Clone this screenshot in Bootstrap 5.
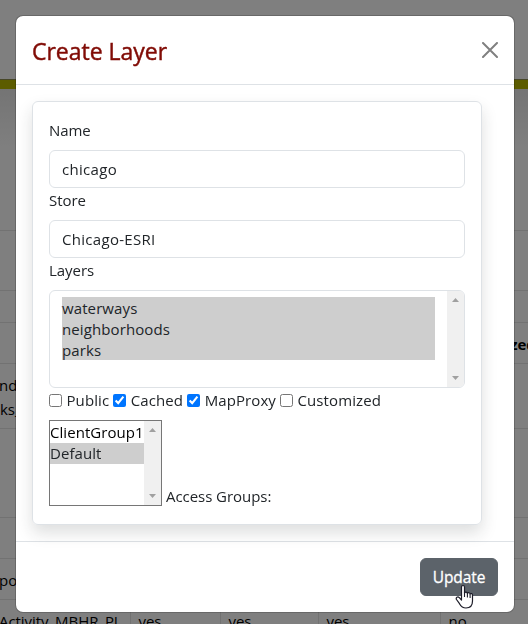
<!DOCTYPE html>
<html lang="en">
<head>
<meta charset="utf-8">
<meta name="viewport" content="width=device-width, initial-scale=1">
<title>Create Layer</title>
<link href="https://cdn.jsdelivr.net/npm/bootstrap@5.3.0/dist/css/bootstrap.min.css" rel="stylesheet">
<style>
  body { font-family: "Segoe UI", "Open Sans", sans-serif; font-size: 15px; line-height: 24px; letter-spacing: -.05px; background: #fff; height: 624px; overflow: hidden; }
  .top-strip { height: 79px; background: #fefefe; }
  .olive-bar { height: 10px; background: #b8b800; border-top: 1px solid #8f8f50; }
  .fade-area { height: 142px; background: linear-gradient(#e9e9e9, #fff 60px); border-bottom: 1px solid #e4e4e4; }
  .gap-a { height: 60px; border-bottom: 1px solid #e4e4e4; }
  .gap-b { height: 32px; border-bottom: 1px solid #e4e4e4; }
  .layer-table { table-layout: fixed; width: 528px; margin: 0; color: #000; }
  .layer-table > :not(caption) > * > * { padding: 9px 8px 7px; border: 0 solid #e4e4e4; border-bottom-width: 1px; border-right-width: 1px; white-space: nowrap; overflow: hidden; background: transparent; color: #000; }
  .layer-table > :not(caption) > * > .first-col { padding-left: 0; padding-right: 0; text-indent: -1px; }
  .layer-table > :not(caption) > * > :last-child { border-right-width: 0; padding-right: 0; }
  .h-40 { height: 40px; } .h-41 { height: 41px; } .h-65 { height: 65px; } .h-89 { height: 89px; }
  .modal-backdrop { --bs-backdrop-opacity: .5; width: 100%; height: 100%; }
  .modal-dialog { max-width: 500px; width: 500px; margin: 15px 0 0 15px; }
  .modal-content { --bs-modal-border-radius: 8px; border-radius: 8px; border: 1px solid rgba(0,0,0,.18); color: #212529; }
  .modal-header { height: 69px; padding: 17px 16px 15px; border-bottom: 1px solid #dee2e6; }
  .modal-title { color: #800b05; font-size: 23px; font-weight: 500; letter-spacing: -.02px; line-height: 36px; -webkit-text-stroke: .45px #800b05; }
  .close-mark { margin-bottom: 2px; }
  .modal-body { padding: 16px 32px 16px 16px; }
  .form-panel { height: 424px; border: 1px solid #dee2e6; border-radius: 6px; padding: 16px; }
  .form-control { font-size: 15px; height: 38px; line-height: 24px; padding: 6px 12px; border-color: #dee2e6; letter-spacing: .3px; }
  .form-label { display: block; margin-bottom: 8px; height: 24px; }
  .list-box { background: #fff; line-height: 21px; overflow: hidden; }
  .list-box.wide { height: 98px; border: 1px solid #dee2e6; border-radius: 6px; letter-spacing: .1px; }
  .list-box.wide .choices { padding: 6px 12px; }
  .list-box.wide .choices div { padding-top: 1px; }
  .list-box.slim { width: 113px; height: 86px; border: 1px solid #767676; color: #000; letter-spacing: .05px; }
  .list-box.slim .choices { padding-top: 1px; }
  .picked { background: #cecece; color: #212529; }
  .choices div { height: 21px; white-space: nowrap; }
  .list-scroll { width: 17px; background: #f0f0f0; flex: none; padding: 7px 0; }
  .check-row { height: 24px; white-space: nowrap; letter-spacing: .1px; }
  .check-row input { width: 13px; height: 13px; margin: 0 4.5px 0 0; }
  .access-label { line-height: 20px; }
  .modal-footer { height: 71px; padding: 16px; border-top: 1px solid #dee2e6; }
  .modal-footer > * { margin: 0; }
  .btn-update { width: 78px; height: 38px; padding: 2px 0 0; font-size: 15.5px; font-weight: 500; letter-spacing: -.1px; -webkit-text-stroke: .3px #fff; background: #5c636a; border-color: #5c636a; color: #fff; }
  .pointer { position: absolute; left: 455px; top: 584px; z-index: 1100; }
</style>
</head>
<body>
<div class="top-strip"></div>
<div class="olive-bar"></div>
<div class="fade-area"></div>
<div class="gap-a"></div>
<div class="gap-b"></div>
<table class="table layer-table">
  <colgroup><col style="width:130px"><col style="width:90px"><col style="width:98px"><col style="width:122px"><col></colgroup>
  <thead><tr class="h-40"><th class="first-col"></th><th></th><th></th><th></th><th>Customized</th></tr></thead>
  <tbody>
    <tr class="h-65"><td class="first-col">nd_<br>ks_</td><td></td><td></td><td></td><td></td></tr>
    <tr class="h-89"><td class="first-col"></td><td></td><td></td><td></td><td></td></tr>
    <tr class="h-41"><td class="first-col"></td><td></td><td></td><td></td><td></td></tr>
    <tr class="h-41"><td class="first-col">po</td><td></td><td></td><td></td><td></td></tr>
    <tr class="h-41"><td class="first-col">Activity_MBHR_PL</td><td>yes</td><td>yes</td><td>yes</td><td>no</td></tr>
  </tbody>
</table>

<div class="modal-backdrop show"></div>
<div class="modal d-block overflow-hidden" tabindex="-1">
  <div class="modal-dialog">
    <div class="modal-content">
      <div class="modal-header d-flex align-items-center justify-content-between">
        <h4 class="modal-title">Create Layer</h4>
        <svg width="16" height="16" viewBox="0 0 16 16" class="close-mark" stroke="#808080" stroke-width="2" stroke-linecap="round" role="img" aria-label="Close"><path d="M1 1 15 15M15 1 1 15"/></svg>
      </div>
      <div class="modal-body">
        <form class="form-panel shadow">
          <label class="form-label" for="name">Name</label>
          <input class="form-control" id="name" value="chicago">
          <label class="form-label" for="store">Store</label>
          <input class="form-control" id="store" value="Chicago-ESRI">
          <span class="form-label">Layers</span>
          <div class="list-box wide d-flex">
            <div class="choices flex-grow-1">
              <div class="picked">waterways</div><div class="picked">neighborhoods</div><div class="picked">parks</div>
            </div>
            <div class="list-scroll d-flex flex-column justify-content-between align-items-center">
              <svg width="7" height="4" viewBox="0 0 7 4"><path d="M0 4 3.5 0 7 4z" fill="#a0a0a0"/></svg>
              <svg width="7" height="4" viewBox="0 0 7 4"><path d="M0 0 3.5 4 7 0z" fill="#a0a0a0"/></svg>
            </div>
          </div>
          <div class="check-row d-flex align-items-center gap-1">
            <label class="d-flex align-items-center"><input type="checkbox">Public</label>
            <label class="d-flex align-items-center"><input type="checkbox" checked>Cached</label>
            <label class="d-flex align-items-center"><input type="checkbox" checked>MapProxy</label>
            <label class="d-flex align-items-center"><input type="checkbox">Customized</label>
          </div>
          <div class="d-flex align-items-end gap-1 pt-2">
            <div class="list-box slim d-flex">
              <div class="choices flex-grow-1">
                <div>ClientGroup1</div><div class="picked">Default</div>
              </div>
              <div class="list-scroll d-flex flex-column justify-content-between align-items-center">
                <svg width="7" height="4" viewBox="0 0 7 4"><path d="M0 4 3.5 0 7 4z" fill="#a0a0a0"/></svg>
                <svg width="7" height="4" viewBox="0 0 7 4"><path d="M0 0 3.5 4 7 0z" fill="#a0a0a0"/></svg>
              </div>
            </div>
            <span class="access-label">Access Groups:</span>
          </div>
        </form>
      </div>
      <div class="modal-footer">
        <button type="button" class="btn btn-secondary btn-update">Update</button>
      </div>
    </div>
  </div>
</div>
<svg class="pointer" width="19" height="26" viewBox="0 0 19 26"><path d="M6.5 15V3.2C6.5.9 9.5.9 9.5 3.2V9c.3-1.4 2.8-1.2 2.9.4.5-1.1 2.6-.9 2.7.6.7-.9 2.4-.5 2.4 1.2V17c0 4-2.2 7-6.5 7-3.5 0-5-1.5-6.5-4.3L1.5 15.5C.5 13.5 2.8 12 4.3 13.6L6.5 16z" fill="#fff" stroke="#1c1c28" stroke-width="1.2" stroke-linejoin="round"/><path d="M9.5 8.5V13M12.4 9.2V13.5M15.1 10V14" stroke="#1c1c28" stroke-width="1.1" fill="none"/></svg>
<script src="https://cdn.jsdelivr.net/npm/bootstrap@5.3.0/dist/js/bootstrap.bundle.min.js"></script>
</body>
</html>
